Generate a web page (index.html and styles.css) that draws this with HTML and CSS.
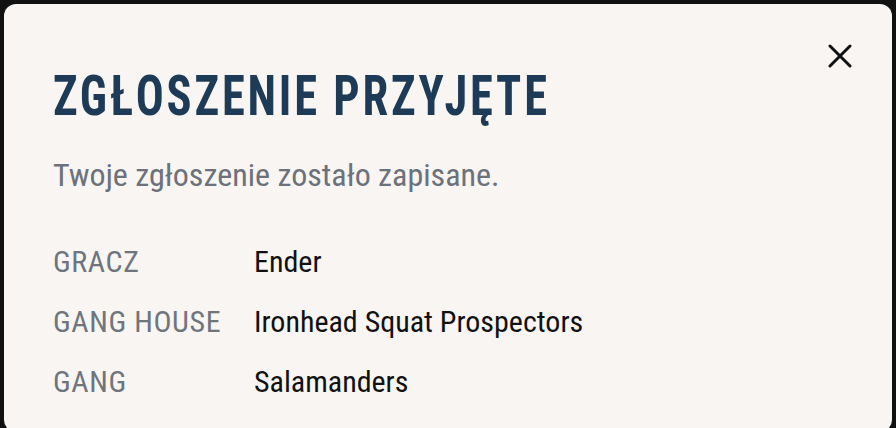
FILE: index.html
```html
<!DOCTYPE html>
<html>
<head>
  <meta charset="utf-8">
  <title>Zgłoszenie przyjęte</title>
  <link rel="stylesheet" href="styles.css">
</head>
<body>
<div class="modal">
  <button class="close" aria-label="Zamknij">
    <svg width="24" height="24" viewBox="0 0 24 24">
      <path d="M2 2 L22 22 M22 2 L2 22" stroke="#111" stroke-width="3" stroke-linecap="round" fill="none"/>
    </svg>
  </button>
  <h1 class="title">Zgłoszenie przyjęte</h1>
  <p class="lead">Twoje zgłoszenie zostało zapisane.</p>
  <dl class="details">
    <dt>Gracz</dt>
    <dd>Ender</dd>
    <dt>Gang house</dt>
    <dd>Ironhead Squat Prospectors</dd>
    <dt>Gang</dt>
    <dd>Salamanders</dd>
  </dl>
</div>
</body>
</html>
```

FILE: styles.css
```css
html, body {
  margin: 0;
  padding: 0;
  height: 100%;
}

body {
  background: #111;
  font-family: "Roboto Condensed", "Roboto", "Liberation Sans", sans-serif;
  font-stretch: condensed;
  overflow: hidden;
}

.modal {
  position: relative;
  margin: 4px 4px 0;
  min-height: 100%;
  background: #f8f5f2;
  border-radius: 12px;
  padding: 59px 49px 0;
  box-sizing: border-box;
}

.close {
  position: absolute;
  top: 40px;
  right: 40px;
  background: none;
  border: 0;
  padding: 0;
  cursor: pointer;
}

.close svg {
  display: block;
}

/* heading face is narrower than the condensed body font */
.title {
  display: inline-block;
  margin: 0;
  font-size: 55px;
  font-weight: 700;
  line-height: 66px;
  letter-spacing: 0.06em;
  text-transform: uppercase;
  white-space: nowrap;
  color: #1d3a56;
  transform: scaleX(0.846);
  transform-origin: left center;
}

.lead {
  margin: 26px 0 0;
  font-size: 32px;
  line-height: 40px;
  color: #6c717a;
}

.details {
  display: grid;
  grid-template-columns: 201px auto;
  row-gap: 24px;
  margin: 49px 0 0;
  font-size: 30px;
  line-height: 36px;
}

.details dt {
  text-transform: uppercase;
  letter-spacing: 0.02em;
  color: #70757d;
}

.details dd {
  margin: 0;
  color: #111;
}
```
